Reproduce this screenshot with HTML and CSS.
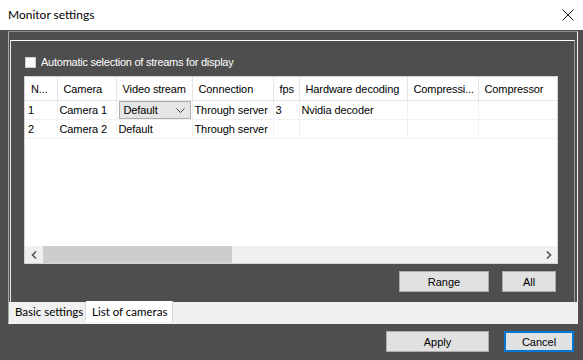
FILE: index.html
```html
<!DOCTYPE html>
<html>
<head>
    <title>Monitor settings</title>
    <link rel="stylesheet" href="styles.css">
</head>
<body>
    <div class="titlebar">
        <span class="title">Monitor settings</span>
        <svg class="close" width="12" height="12" viewBox="0 0 12 12">
            <path d="M0.5 0.5 L11.5 11.5 M11.5 0.5 L0.5 11.5" stroke="#111" stroke-width="1" fill="none"/>
        </svg>
    </div>

    <div class="tabs">
        <div class="page">
            <label class="check-row">
                <span class="checkbox"></span>
                <span>Automatic selection of streams for display</span>
            </label>

            <div class="grid">
                <div class="grid-body">
                    <table>
                        <colgroup>
                            <col style="width:32px">
                            <col style="width:59px">
                            <col style="width:76px">
                            <col style="width:81px">
                            <col style="width:26px">
                            <col style="width:108px">
                            <col style="width:71px">
                            <col style="width:90px">
                        </colgroup>
                        <tr class="head">
                            <th>N...</th>
                            <th>Camera</th>
                            <th>Video stream</th>
                            <th>Connection</th>
                            <th>fps</th>
                            <th>Hardware decoding</th>
                            <th>Compressi...</th>
                            <th>Compressor</th>
                        </tr>
                        <tr>
                            <td>1</td>
                            <td>Camera 1</td>
                            <td class="combo-cell">
                                <div class="combo">
                                    <span>Default</span>
                                    <svg width="9" height="5" viewBox="0 0 9 5">
                                        <path d="M0.5 0.5 L4.5 4.5 L8.5 0.5" stroke="#444" fill="none"/>
                                    </svg>
                                </div>
                            </td>
                            <td>Through server</td>
                            <td>3</td>
                            <td>Nvidia decoder</td>
                            <td></td>
                            <td></td>
                        </tr>
                        <tr>
                            <td>2</td>
                            <td>Camera 2</td>
                            <td>Default</td>
                            <td>Through server</td>
                            <td></td>
                            <td></td>
                            <td></td>
                            <td></td>
                        </tr>
                    </table>
                </div>
                <div class="hscroll">
                    <div class="arrow">
                        <svg width="6" height="8" viewBox="0 0 6 8"><path d="M5 0.5 L1.5 4 L5 7.5" stroke="#555" stroke-width="1.6" fill="none"/></svg>
                    </div>
                    <div class="track">
                        <div class="thumb"></div>
                    </div>
                    <div class="arrow">
                        <svg width="6" height="8" viewBox="0 0 6 8"><path d="M1 0.5 L4.5 4 L1 7.5" stroke="#555" stroke-width="1.6" fill="none"/></svg>
                    </div>
                </div>
            </div>

            <div class="page-buttons">
                <button class="btn range">Range</button>
                <button class="btn all">All</button>
            </div>
        </div>
        <div class="tabstrip">
            <div class="tab">Basic settings</div>
            <div class="tab active">List of cameras</div>
        </div>
    </div>

    <div class="dialog-buttons">
        <button class="btn apply">Apply</button>
        <button class="btn cancel">Cancel</button>
    </div>
</body>
</html>
```

FILE: styles.css
```css
body { margin: 0; width: 583px; height: 360px; overflow: hidden; background: #4e4e4e; font-family: "Liberation Sans", Arial, sans-serif; font-size: 11px; color: #000; }

.titlebar { height: 30px; background: #fff; display: flex; align-items: center; justify-content: space-between; padding: 0 9px 0 8px; box-sizing: border-box; }
.title { font-family: Lato, "Open Sans", sans-serif; font-size: 12px; color: #000; margin-top: -1px; }
.close { margin-top: -1px; }

.tabs { margin: 1px 5px 0 8px; height: 293px; box-sizing: border-box; border-top: 1px solid #8c8c8c; border-left: 1px solid #a8a8a8; border-right: 1px solid #f4f4f4; border-bottom: 1px solid #f4f4f4; padding-top: 8px; display: flex; flex-direction: column; }

.page { margin: 0 2px 0 1px; height: 262px; box-sizing: border-box; border-top: 1px solid #fff; border-left: 1px solid #e8e8e8; border-right: 1px solid #9a9a9a; padding: 0 0 0 13px; }

.check-row { display: flex; align-items: center; height: 14px; margin-top: 14px; color: #fff; letter-spacing: -0.25px; }
.checkbox { width: 11px; height: 11px; background: #fbfbfb; border: 1px solid #cfcfcf; box-sizing: border-box; margin: 0 5px 0 1px; }

.grid { width: 534px; height: 188px; margin-top: 7px; background: #fff; border: 1px solid #d4d4d4; box-sizing: border-box; display: flex; flex-direction: column; }
.grid-body { flex: 1; overflow: hidden; }
table { width: 543px; table-layout: fixed; border-collapse: collapse; }
th, td { padding: 0; white-space: nowrap; overflow: hidden; text-align: left; font-weight: normal; letter-spacing: -0.1px; }
th { height: 23px; padding-left: 6px; border-right: 1px solid #e5e5e5; border-bottom: 1px solid #e5e5e5; }
td { height: 18px; padding-left: 2px; border-right: 1px solid #f0f0f0; border-bottom: 1px solid #f0f0f0; }
td:first-child { padding-left: 3px; }
.combo-cell { padding: 0 1px 0 2px; }
.combo { height: 18px; box-sizing: border-box; background: #e5e5e5; border: 1px solid #adadad; display: flex; align-items: center; justify-content: space-between; padding: 0 5px 0 4px; }

.hscroll { height: 17px; display: flex; background: #f0f0f0; }
.arrow { width: 17px; display: flex; align-items: center; justify-content: center; }
.track { flex: 1; }
.thumb { width: 189px; height: 100%; background: #cdcdcd; margin-left: 1px; }

.btn { font-family: "Liberation Sans", Arial, sans-serif; font-size: 11px; color: #000; background: #e1e1e1; border: 1px solid #adadad; height: 21px; padding: 0; }
.page-buttons { width: 532px; display: flex; justify-content: flex-end; gap: 13px; margin-top: 7px; }
.range { width: 90px; }
.all { width: 54px; }

.tabstrip { flex: 1; display: flex; background: #f0f0f0; font-family: Lato, "Open Sans", sans-serif; font-size: 11.5px; padding-left: 1px; }
.tab { display: flex; align-items: center; white-space: nowrap; padding: 0 5px; width: 76px; box-sizing: border-box; height: 18px; border-right: 1px solid #d9d9d9; }
.tab.active { background: #fff; width: 87px; height: 21px; padding: 0 6px; margin-top: -1px; }

.dialog-buttons { display: flex; justify-content: flex-end; gap: 15px; padding: 7px 9px 0 0; }
.apply { width: 103px; }
.cancel { width: 70px; border: 2px solid #0078d7; }
```
